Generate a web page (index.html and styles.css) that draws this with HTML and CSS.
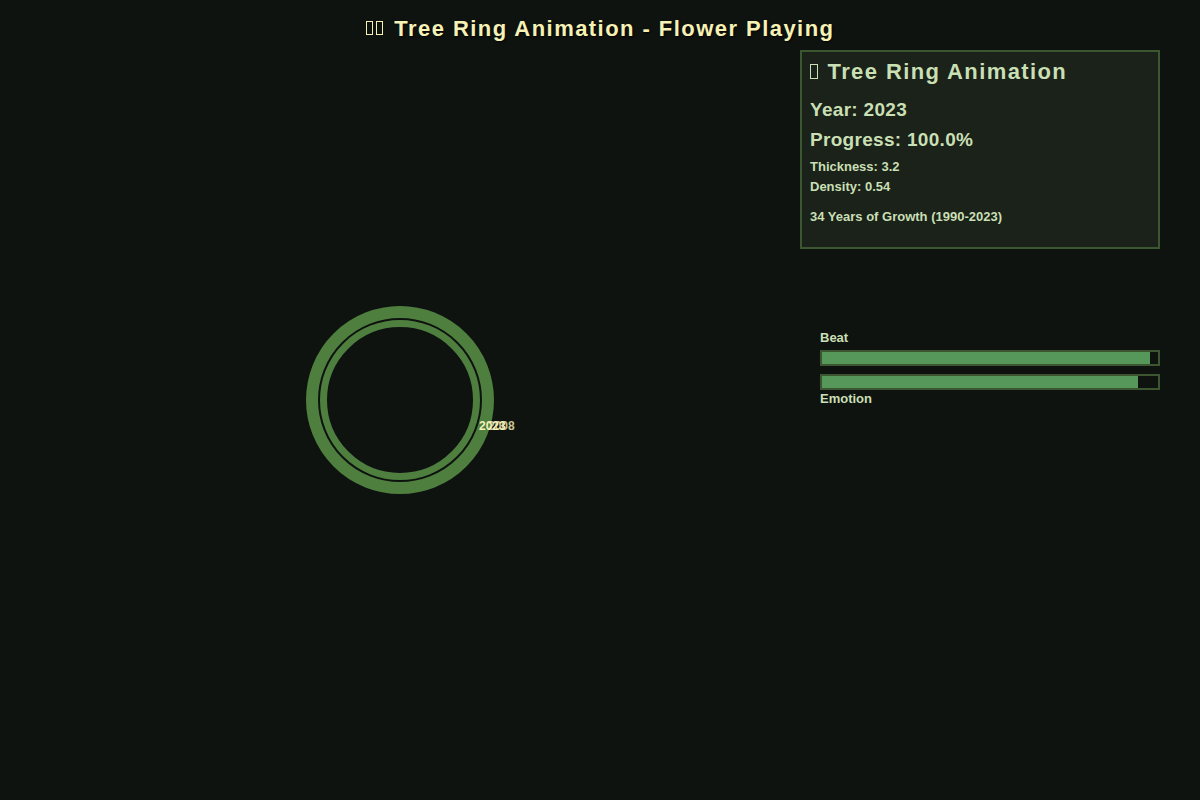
FILE: index.html
```html
<!DOCTYPE html>
<html lang="en">
<head>
<meta charset="utf-8">
<title>Tree Ring Animation</title>
<link rel="stylesheet" href="styles.css">
</head>
<body>
<div class="app">
  <svg class="canvas" width="1200" height="800" viewBox="0 0 1200 800">
    <circle cx="400" cy="400" r="88" class="ring ring-outer"/>
    <circle cx="400" cy="400" r="76.5" class="ring ring-inner"/>
    <text x="479" y="430" class="year-label">2023</text>
    <text x="488" y="430" class="year-label faded">2008</text>
  </svg>
  <h1 class="title"><span class="tofu">🌳</span><span class="tofu">🎵</span> Tree Ring Animation - Flower Playing</h1>
  <div class="content">
    <aside class="side">
      <section class="panel">
        <h2 class="panel-title"><span class="tofu tofu-lg">🌳</span> Tree Ring Animation</h2>
        <div class="big">Year: 2023</div>
        <div class="big">Progress: 100.0%</div>
        <div class="small first">Thickness: 3.2</div>
        <div class="small">Density: 0.54</div>
        <div class="small growth">34 Years of Growth (1990-2023)</div>
      </section>
      <section class="meters">
        <div class="meter-label">Beat</div>
        <div class="bar"><div class="fill" style="width:97.6%"></div></div>
        <div class="bar second"><div class="fill" style="width:94%"></div></div>
        <div class="meter-label bottom">Emotion</div>
      </section>
    </aside>
  </div>
</div>
</body>
</html>
```
FILE: styles.css
```css
html, body {
  margin: 0;
  padding: 0;
  background: #0f130f;
}
body {
  width: 1200px;
  height: 800px;
  overflow: hidden;
  font-family: "Liberation Sans", Arial, sans-serif;
}
.app {
  position: relative;
  width: 1200px;
  height: 800px;
}
.canvas {
  position: absolute;
  left: 0;
  top: 0;
}
.ring {
  fill: none;
  stroke: #4e7f3f;
}
.ring-outer { stroke-width: 12; }
.ring-inner { stroke-width: 7; }
.year-label {
  font-family: "Liberation Sans", Arial, sans-serif;
  font-weight: bold;
  font-size: 12px;
  fill: #f4f0b8;
}
.year-label.faded { opacity: 0.8; }
.title {
  position: relative;
  margin: 0;
  padding-top: 16px;
  height: 34px;
  line-height: 26px;
  text-align: center;
  font-size: 22px;
  font-weight: bold;
  letter-spacing: 1.45px;
  color: #f6f2b6;
  text-shadow: 1px 1px 2px rgba(0,0,0,0.8);
}
.tofu {
  display: inline-block;
  box-sizing: border-box;
  width: 7px;
  height: 14px;
  border: 1px solid currentColor;
  margin-right: 3.6px;
  vertical-align: 1px;
  overflow: hidden;
  color: inherit;
  font-size: 8px;
  line-height: 12px;
  letter-spacing: 0;
  -webkit-text-fill-color: transparent;
  text-shadow: none;
}
.tofu-lg {
  width: 8px;
  height: 15px;
  margin-right: 2px;
  vertical-align: 0;
}
.content {
  position: relative;
  display: flex;
  justify-content: flex-end;
  padding-right: 40px;
}
.side {
  width: 360px;
  display: flex;
  flex-direction: column;
}
.panel {
  background: #1a2219;
  border: 2px solid #3c5632;
  padding: 5px 8px 20px 8px;
  color: #c9dfb4;
  font-weight: bold;
}
.panel-title {
  margin: 0 0 8px 0;
  font-size: 22px;
  line-height: 30px;
  letter-spacing: 1.4px;
}
.big {
  font-size: 19px;
  line-height: 30px;
  letter-spacing: 0.3px;
}
.small {
  font-size: 13px;
  line-height: 20px;
}
.small.first { margin-top: 2px; }
.small.growth { margin-top: 10px; }
.meters {
  margin-top: 81px;
  padding-left: 20px;
  color: #c9dfb4;
}
.meter-label {
  font-size: 13px;
  font-weight: bold;
  line-height: 16px;
  height: 16px;
  margin-bottom: 4px;
}
.meter-label.bottom {
  margin-top: 1px;
  margin-bottom: 0;
}
.bar {
  height: 12px;
  border: 2px solid #3c5632;
  background: #0f130f;
}
.bar.second { margin-top: 8px; }
.fill {
  height: 100%;
  background: #55985a;
}
```
